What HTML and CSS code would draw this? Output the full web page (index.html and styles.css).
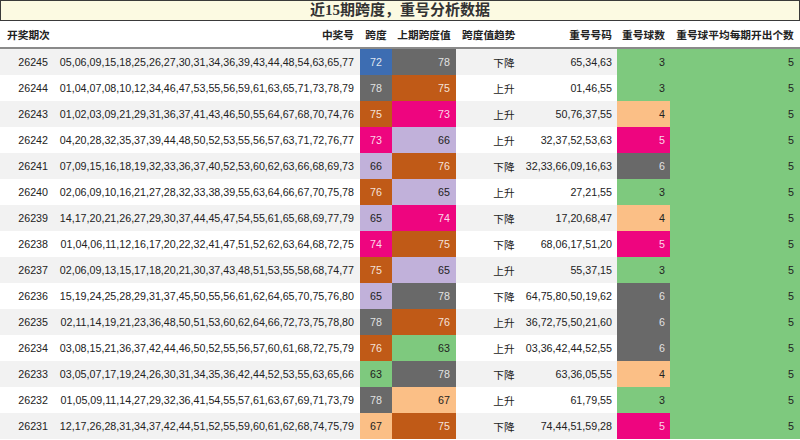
FILE: index.html
```html
<!DOCTYPE html>
<html lang="zh">
<head>
<meta charset="utf-8">
<title>近15期跨度，重号分析数据</title>
<link rel="stylesheet" href="styles.css">
</head>
<body>
<div class="page">
  <div class="title">近15期跨度，重号分析数据</div>
  <div class="row head">
    <div class="c c1">开奖期次</div>
    <div class="c c2">中奖号</div>
    <div class="c c3">跨度</div>
    <div class="c c4">上期跨度值</div>
    <div class="c c5">跨度值趋势</div>
    <div class="c c6">重号号码</div>
    <div class="c c7">重号球数</div>
    <div class="c c8">重号球平均每期开出个数</div>
  </div>
  <div class="rows">
    <div class="row"><div class="c c1">26245</div><div class="c c2">05,06,09,15,18,25,26,27,30,31,34,36,39,43,44,48,54,63,65,77</div><div class="c c3 blue">72</div><div class="c c4 grey">78</div><div class="c c5">下降</div><div class="c c6">65,34,63</div><div class="c c7 green">3</div><div class="c c8 green">5</div></div>
    <div class="row"><div class="c c1">26244</div><div class="c c2">01,04,07,08,10,12,34,46,47,53,55,56,59,61,63,65,71,73,78,79</div><div class="c c3 grey">78</div><div class="c c4 orange">75</div><div class="c c5">上升</div><div class="c c6">01,46,55</div><div class="c c7 green">3</div><div class="c c8 green">5</div></div>
    <div class="row"><div class="c c1">26243</div><div class="c c2">01,02,03,09,21,29,31,36,37,41,43,46,50,55,64,67,68,70,74,76</div><div class="c c3 orange">75</div><div class="c c4 pink">73</div><div class="c c5">上升</div><div class="c c6">50,76,37,55</div><div class="c c7 peach">4</div><div class="c c8 green">5</div></div>
    <div class="row"><div class="c c1">26242</div><div class="c c2">04,20,28,32,35,37,39,44,48,50,52,53,55,56,57,63,71,72,76,77</div><div class="c c3 pink">73</div><div class="c c4 lav">66</div><div class="c c5">上升</div><div class="c c6">32,37,52,53,63</div><div class="c c7 pink">5</div><div class="c c8 green">5</div></div>
    <div class="row"><div class="c c1">26241</div><div class="c c2">07,09,15,16,18,19,32,33,36,37,40,52,53,60,62,63,66,68,69,73</div><div class="c c3 lav">66</div><div class="c c4 orange">76</div><div class="c c5">下降</div><div class="c c6">32,33,66,09,16,63</div><div class="c c7 grey">6</div><div class="c c8 green">5</div></div>
    <div class="row"><div class="c c1">26240</div><div class="c c2">02,06,09,10,16,21,27,28,32,33,38,39,55,63,64,66,67,70,75,78</div><div class="c c3 orange">76</div><div class="c c4 lav">65</div><div class="c c5">上升</div><div class="c c6">27,21,55</div><div class="c c7 green">3</div><div class="c c8 green">5</div></div>
    <div class="row"><div class="c c1">26239</div><div class="c c2">14,17,20,21,26,27,29,30,37,44,45,47,54,55,61,65,68,69,77,79</div><div class="c c3 lav">65</div><div class="c c4 pink">74</div><div class="c c5">下降</div><div class="c c6">17,20,68,47</div><div class="c c7 peach">4</div><div class="c c8 green">5</div></div>
    <div class="row"><div class="c c1">26238</div><div class="c c2">01,04,06,11,12,16,17,20,22,32,41,47,51,52,62,63,64,68,72,75</div><div class="c c3 pink">74</div><div class="c c4 orange">75</div><div class="c c5">下降</div><div class="c c6">68,06,17,51,20</div><div class="c c7 pink">5</div><div class="c c8 green">5</div></div>
    <div class="row"><div class="c c1">26237</div><div class="c c2">02,06,09,13,15,17,18,20,21,30,37,43,48,51,53,55,58,68,74,77</div><div class="c c3 orange">75</div><div class="c c4 lav">65</div><div class="c c5">上升</div><div class="c c6">55,37,15</div><div class="c c7 green">3</div><div class="c c8 green">5</div></div>
    <div class="row"><div class="c c1">26236</div><div class="c c2">15,19,24,25,28,29,31,37,45,50,55,56,61,62,64,65,70,75,76,80</div><div class="c c3 lav">65</div><div class="c c4 grey">78</div><div class="c c5">下降</div><div class="c c6">64,75,80,50,19,62</div><div class="c c7 grey">6</div><div class="c c8 green">5</div></div>
    <div class="row"><div class="c c1">26235</div><div class="c c2">02,11,14,19,21,23,36,48,50,51,53,60,62,64,66,72,73,75,78,80</div><div class="c c3 grey">78</div><div class="c c4 orange">76</div><div class="c c5">上升</div><div class="c c6">36,72,75,50,21,60</div><div class="c c7 grey">6</div><div class="c c8 green">5</div></div>
    <div class="row"><div class="c c1">26234</div><div class="c c2">03,08,15,21,36,37,42,44,46,50,52,55,56,57,60,61,68,72,75,79</div><div class="c c3 orange">76</div><div class="c c4 green">63</div><div class="c c5">上升</div><div class="c c6">03,36,42,44,52,55</div><div class="c c7 grey">6</div><div class="c c8 green">5</div></div>
    <div class="row"><div class="c c1">26233</div><div class="c c2">03,05,07,17,19,24,26,30,31,34,35,36,42,44,52,53,55,63,65,66</div><div class="c c3 green">63</div><div class="c c4 grey">78</div><div class="c c5">下降</div><div class="c c6">63,36,05,55</div><div class="c c7 peach">4</div><div class="c c8 green">5</div></div>
    <div class="row"><div class="c c1">26232</div><div class="c c2">01,05,09,11,14,27,29,32,36,41,54,55,57,61,63,67,69,71,73,79</div><div class="c c3 grey">78</div><div class="c c4 peach">67</div><div class="c c5">上升</div><div class="c c6">61,79,55</div><div class="c c7 green">3</div><div class="c c8 green">5</div></div>
    <div class="row"><div class="c c1">26231</div><div class="c c2">12,17,26,28,31,34,37,42,44,51,52,55,59,60,61,62,68,74,75,79</div><div class="c c3 peach">67</div><div class="c c4 orange">75</div><div class="c c5">下降</div><div class="c c6">74,44,51,59,28</div><div class="c c7 pink">5</div><div class="c c8 green">5</div></div>
  </div>
</div>
</body>
</html>
```

FILE: styles.css
```css
* { box-sizing: border-box; }

html, body {
  margin: 0;
  padding: 0;
  background: #ffffff;
}

.page {
  width: 800px;
  font-family: "Liberation Sans", "Noto Sans CJK SC", sans-serif;
  font-size: 10.7px;
  color: #222222;
}

.title {
  height: 21px;
  border: 1px solid #3a3a3a;
  background: #fcfae2;
  color: #333333;
  font-family: "Liberation Serif", "Noto Sans CJK SC", serif;
  font-size: 15px;
  font-weight: bold;
  line-height: 19px;
  text-align: center;
}

.row {
  display: grid;
  grid-template-columns: 52px 308px 32px 64px 96px 65px 53px 130px;
  height: 26px;
}

.rows .row:nth-child(odd) { background: #f2f2f2; }
.rows .row:nth-child(even) { background: #ffffff; }

.c {
  display: flex;
  align-items: center;
  white-space: nowrap;
  min-width: 0;
}

.head {
  border-bottom: 2px solid #8a8a8a;
  height: 28px;
  font-family: "Noto Sans CJK SC", sans-serif;
  font-weight: bold;
}

.head .c1 { justify-content: flex-start; padding-left: 7px; }
.head .c2 { justify-content: flex-end; padding-right: 6px; }
.head .c3 { justify-content: center; }
.head .c4 { justify-content: center; }
.head .c5 { justify-content: flex-start; padding-left: 6px; }
.head .c6 { justify-content: flex-end; padding-right: 5px; }
.head .c7 { justify-content: center; }
.head .c8 { justify-content: center; }

.rows .c1 { justify-content: flex-end; padding-right: 4px; }
.rows .c2 { justify-content: flex-end; padding-right: 6px; }
.rows .c3 { justify-content: center; }
.rows .c4 { justify-content: flex-end; padding-right: 6px; }
.rows .c5 { justify-content: center; font-family: "Noto Sans CJK SC", sans-serif; }
.rows .c6 { justify-content: flex-end; padding-right: 5px; }
.rows .c7 { justify-content: flex-end; padding-right: 5px; }
.rows .c8 { justify-content: flex-end; padding-right: 6px; }

.blue { background: #3d6db2; color: rgba(255, 255, 255, 0.85); }
.grey { background: #696969; color: rgba(255, 255, 255, 0.82); }
.orange { background: #c05a17; color: rgba(255, 255, 255, 0.85); }
.pink { background: #ee057f; color: rgba(255, 255, 255, 0.85); }
.lav { background: #c1b1da; color: #222222; }
.peach { background: #fbbf86; color: #222222; }
.green { background: #7ec97e; color: #222222; }
```
